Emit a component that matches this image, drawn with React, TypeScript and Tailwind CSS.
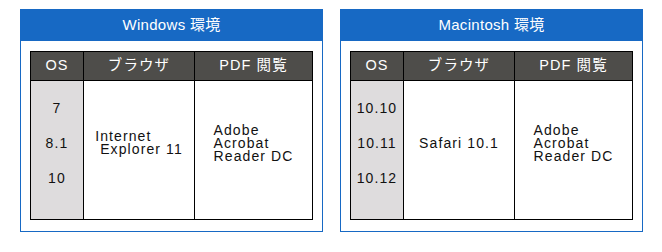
import React from "react";

const font = { fontFamily: '"Liberation Sans", "Noto Sans CJK JP", sans-serif' };

function Box({
  title,
  versions,
  browser,
}: {
  title: string;
  versions: string[];
  browser: React.ReactNode;
}) {
  return (
    <div className="w-[303px] h-[223px] border border-[#1769c4] bg-white flex flex-col">
      <div className="h-[31px] bg-[#1769c4] text-white text-[15px] tracking-[0.3px] flex items-center justify-center">
        {title}
      </div>
      <div className="mt-[10px] mx-[9px] w-[283px] h-[169px] border border-black flex flex-col text-[14px] tracking-[1.1px] text-[#111]">
        <div className="h-[29px] bg-[#4e4d4a] border-b border-black flex text-white text-[14.5px]">
          <div className="w-[52px] flex items-center justify-center">OS</div>
          <div className="w-[111px] border-l border-black flex items-center justify-center">ブラウザ</div>
          <div className="flex-1 border-l border-black flex items-center justify-center">PDF 閲覧</div>
        </div>
        <div className="flex-1 flex">
          <div className="w-[52px] bg-[#dedcdd] flex flex-col items-center justify-center pb-[14px]">
            {versions.map((v) => (
              <div key={v} className="leading-[35px]">
                {v}
              </div>
            ))}
          </div>
          <div className="w-[111px] border-l border-black flex items-center justify-center pb-[14px]">
            {browser}
          </div>
          <div className="flex-1 border-l border-black flex items-center justify-center pb-[14px]">
            <div className="text-left leading-[13px]">
              <div>Adobe</div>
              <div>Acrobat</div>
              <div>Reader DC</div>
            </div>
          </div>
        </div>
      </div>
    </div>
  );
}

export default function App() {
  return (
    <div className="w-[662px] h-[252px] bg-white flex gap-[17px] pl-[20px] pt-[9px]" style={font}>
      <Box
        title="Windows 環境"
        versions={["7", "8.1", "10"]}
        browser={
          <div className="text-left leading-[13px]">
            <div>Internet</div>
            <div>{"\u00a0Explorer 11"}</div>
          </div>
        }
      />
      <Box
        title="Macintosh 環境"
        versions={["10.10", "10.11", "10.12"]}
        browser={<div className="leading-[13px]">Safari 10.1</div>}
      />
    </div>
  );
}
